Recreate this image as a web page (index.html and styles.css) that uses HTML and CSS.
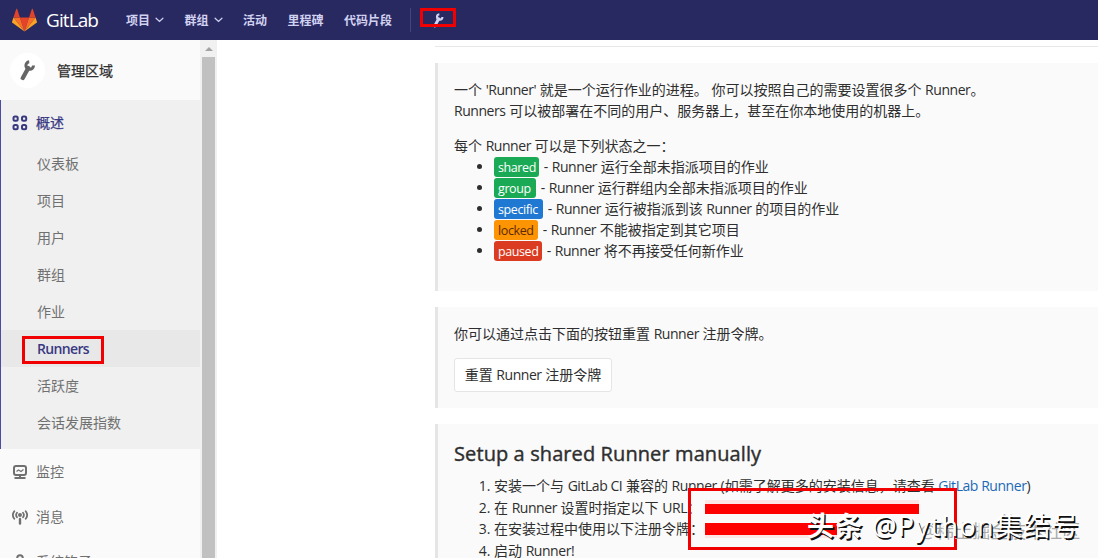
FILE: index.html
```
<!DOCTYPE html>
<html lang="zh-CN">
  <head>
    <meta charset="utf-8" />
    <title>Runners · 管理区域 · GitLab</title>
    <link rel="stylesheet" href="styles.css">
  </head>
  <body>
    <svg class="sprite">
      <symbol id="wrench" viewBox="0 0 16 21">
        <path d="M9.200 1.700A3.800 3.800 0 1 0 13.500 5.500" fill="none" stroke="currentColor" stroke-width="3" />
        <path d="M8.300 8 2.800 18" fill="none" stroke="currentColor" stroke-width="4.200" stroke-linecap="round" />
      </symbol>
      <symbol id="chevron" viewBox="0 0 10 6">
        <path d="M1.2 1.1 5 4.6l3.8-3.5" fill="none" stroke="currentColor" stroke-width="1.4" stroke-linecap="round" />
      </symbol>
    </svg>

    <header class="navbar">
      <a class="brand">
        <svg class="tanuki" viewBox="0 0 36 36">
          <path fill="#e24329" d="M18 34 24.6 13.700H11.400z" />
          <path fill="#fc6d26" d="M18 34 11.400 13.700H2.100z" />
          <path fill="#fca326" d="M2.100 13.700.1 19.900c-.2.600 0 1.200.5 1.500L18 34z" />
          <path fill="#e24329" d="M2.100 13.700h9.300L7.400 1.400c-.2-.6-1.100-.6-1.300 0z" />
          <path fill="#fc6d26" d="M18 34l6.600-20.300h9.300z" />
          <path fill="#fca326" d="M33.900 13.700l2 6.200c.2.600 0 1.200-.5 1.500L18 34z" />
          <path fill="#e24329" d="M33.900 13.700h-9.300l4-12.300c.2-.6 1.100-.6 1.300 0z" />
        </svg>
        <span class="brand-name">GitLab</span>
      </a>
      <nav class="nav-links">
        <a>项目 <svg class="chevron"><use href="#chevron" /></svg></a>
        <a>群组 <svg class="chevron"><use href="#chevron" /></svg></a>
        <a>活动</a>
        <a>里程碑</a>
        <a>代码片段</a>
      </nav>
      <a class="admin-link"><svg><use href="#wrench" /></svg></a>
    </header>

    <div class="page">
      <aside class="sidebar">
        <div class="context-header">
          <span class="avatar"><svg><use href="#wrench" /></svg></span>
          <span>管理区域</span>
        </div>
        <div class="section active">
          <a class="section-title">
            <svg class="icon" viewBox="0 0 16 16" fill="none" stroke="currentColor" stroke-width="2">
              <rect x="1.500" y="1.500" width="4.200" height="4.200" rx="1.500" />
              <rect x="10" y="1.500" width="4.200" height="4.200" rx="1.500" />
              <rect x="1.500" y="10" width="4.200" height="4.200" rx="1.500" />
              <rect x="10" y="10" width="4.200" height="4.200" rx="1.500" />
            </svg>
            概述
          </a>
          <ul class="sub-items">
            <li>仪表板</li>
            <li>项目</li>
            <li>用户</li>
            <li>群组</li>
            <li>作业</li>
            <li class="current">Runners</li>
            <li>活跃度</li>
            <li>会话发展指数</li>
          </ul>
        </div>
        <a class="section-title">
          <svg class="icon" viewBox="0 0 16 16" fill="none" stroke="currentColor">
            <rect x="2" y="2" width="12" height="9" rx="2" stroke-width="2" />
            <path d="m4.500 7.500 2-1.500 2.500 1.500 2.500-2" stroke-width="1.200" />
            <path d="M8 11v3M2.500 14h11" stroke-width="2" />
          </svg>
          监控
        </a>
        <a class="section-title">
          <svg class="icon" viewBox="0 0 16 16" fill="none" stroke="currentColor" stroke-width="1.800" stroke-linecap="round">
            <path d="M2.300 2.200Q-.6 6 2.300 9.800M13.700 2.200Q16.600 6 13.700 9.800M5 3.800Q3.200 6 5 8.200M11 3.800Q12.800 6 11 8.200" />
            <circle cx="8" cy="6" r="1.100" fill="currentColor" />
            <path d="M8 10v4.500" stroke-width="2.400" />
          </svg>
          消息
        </a>
        <a class="section-title">
          <svg class="icon" viewBox="0 0 16 16" fill="none" stroke="currentColor" stroke-width="2">
            <circle cx="8" cy="4" r="2.800" />
            <path d="M8 7v8M2 9q0 6 6 6t6-6" />
          </svg>
          系统钩子
        </a>
      </aside>
      <div class="scrollbar"></div>

      <main class="content">
        <hr />
        <section class="well intro">
          <p>一个 <span class="en">'Runner'</span> 就是一个运行作业的进程。 你可以按照自己的需要设置很多个 <span class="en">Runner</span>。<br />
            <span class="en">Runners</span> 可以被部署在不同的用户、服务器上，甚至在你本地使用的机器上。</p>
          <p class="states-title">每个 <span class="en">Runner</span> 可以是下列状态之一：</p>
          <ul class="states">
            <li><span class="badge green w-shared">shared</span> - <span class="en">Runner</span> 运行全部未指派项目的作业</li>
            <li><span class="badge green w-group">group</span> - <span class="en">Runner</span> 运行群组内全部未指派项目的作业</li>
            <li><span class="badge blue w-specific">specific</span> - <span class="en">Runner</span> 运行被指派到该 <span class="en">Runner</span> 的项目的作业</li>
            <li><span class="badge orange w-locked">locked</span> - <span class="en">Runner</span> 不能被指定到其它项目</li>
            <li><span class="badge red w-paused">paused</span> - <span class="en">Runner</span> 将不再接受任何新作业</li>
          </ul>
        </section>
        <section class="well reset">
          <p>你可以通过点击下面的按钮重置 <span class="en">Runner</span> 注册令牌。</p>
          <button>重置 <span class="en">Runner</span> 注册令牌</button>
        </section>
        <section class="well setup">
          <h4>Setup a shared Runner manually</h4>
          <ol>
            <li>安装一个与 <span class="en">GitLab CI</span> 兼容的 <span class="en">Runner</span> (如需了解更多的安装信息，请查看 <a class="en">GitLab Runner</a>)</li>
            <li>在 <span class="en">Runner</span> 设置时指定以下 <span class="en">URL</span>：</li>
            <li>在安装过程中使用以下注册令牌：</li>
            <li>启动 <span class="en">Runner!</span></li>
          </ol>
        </section>
      </main>
    </div>

    <!-- annotations drawn over the page -->
    <div class="mark mark-admin"></div>
    <div class="mark mark-runners"></div>
    <div class="mark mark-token"></div>
    <div class="redact redact-url"></div>
    <div class="redact redact-token"></div>
    <div class="watermark-site">@稀土掘金技术社区</div>
    <div class="watermark"><b>头条</b> @Python集结号</div>
  </body>
</html>
```
FILE: styles.css
```
* {
  box-sizing: border-box;
}
body {
  margin: 0;
  height: 558px;
  overflow: hidden;
  position: relative;
  background: #fff;
  color: #2e2e2e;
  font: 14px/21px "Open Sans", "Noto Sans CJK SC", sans-serif;
}
p,
ul,
ol,
h4 {
  margin: 0;
  padding: 0;
}
.sprite {
  position: absolute;
  width: 0;
  height: 0;
}
.en {
  letter-spacing: -0.45px;
}

/* top bar */
.navbar {
  display: flex;
  align-items: center;
  height: 40px;
  padding-left: 12px;
  background: #292961;
  color: #d1d1f0;
}
.brand {
  display: flex;
  align-items: center;
  width: 114px;
  color: #fff;
}
.tanuki {
  width: 25px;
  height: 25px;
}
.brand-name {
  margin-left: 9px;
  font: 19px/24px "Open Sans", sans-serif;
  letter-spacing: -0.9px;
}
.nav-links {
  display: flex;
  gap: 20.5px;
  font-size: 12px;
  font-weight: 600;
}
.nav-links a {
  display: flex;
  align-items: center;
}
.chevron {
  width: 9px;
  height: 6px;
  margin-left: 5px;
}
.admin-link {
  display: flex;
  align-items: center;
  height: 24px;
  margin-left: 18px;
  padding-left: 21px;
  border-left: 1px solid #45457a;
}
.admin-link svg {
  width: 13px;
  height: 15px;
}

/* sidebar */
.page {
  display: flex;
  height: 518px;
}
.sidebar {
  width: 200px;
  flex: none;
  overflow: hidden;
  background: #fafafa;
  color: #707070;
}
.context-header {
  display: flex;
  align-items: center;
  height: 60px;
  padding-left: 10px;
  gap: 12px;
  color: #2e2e2e;
  -webkit-text-stroke: 0.25px;
}
.avatar {
  display: flex;
  align-items: center;
  justify-content: center;
  width: 35px;
  height: 35px;
  border-radius: 50%;
  background: #fff;
}
.avatar svg {
  width: 16px;
  height: 21px;
  color: #666;
}
.active {
  height: 349px;
  background: #f0f0f0;
  border-left: 1px solid #4b4ba3;
}
.section-title {
  display: flex;
  align-items: center;
  height: 45px;
  padding-left: 12px;
  gap: 8px;
}
.active .section-title {
  padding-left: 11px;
  color: #393982;
  -webkit-text-stroke: 0.25px;
}
.icon {
  width: 16px;
  height: 16px;
}
.sub-items {
  list-style: none;
}
.sub-items li {
  height: 37px;
  padding-left: 36px;
  line-height: 37px;
}
.sub-items .current {
  background: #e8e8e8;
  color: #393982;
  font-weight: 600;
  letter-spacing: -0.65px;
}
.scrollbar {
  width: 17px;
  flex: none;
  border: solid #f1f1f1;
  border-width: 17px 2px 0;
  background: #c1c1c1;
  position: relative;
}
.scrollbar::before {
  content: "";
  position: absolute;
  top: -10px;
  left: 3px;
  border: solid transparent;
  border-width: 0 4px 4px;
  border-bottom-color: #a3a3a3;
}

/* main column */
.content {
  flex: 1;
  padding: 6px 0 0 218px;
  white-space: nowrap;
}
hr {
  height: 1px;
  margin: 0 0 16px;
  border: 0;
  background: #e8e8e8;
}
.well {
  margin-bottom: 16px;
  padding: 16px 16px 0;
  border-left: 3px solid #e5e5e5;
  background: #fafafa;
}
.intro {
  height: 228px;
}
.states-title {
  margin-top: 14px;
}
.states {
  padding-left: 40px;
}
.states li {
  height: 21px;
}
.badge {
  display: inline-block;
  height: 20px;
  margin: 1px 1px 0 0;
  padding: 0 4px;
  border-radius: 3px;
  color: #fff;
  font-size: 12.5px;
  line-height: 21px;
  letter-spacing: -0.4px;
  vertical-align: top;
}
.w-shared {
  width: 45px;
}
.w-group {
  width: 42px;
}
.w-specific {
  width: 49px;
}
.w-locked {
  width: 44px;
}
.w-paused {
  width: 48px;
}
.green {
  background: #1aaa55;
}
.blue {
  background: #1f78d1;
}
.orange {
  background: #fc9403;
  color: #5c2900;
}
.red {
  background: #db3b21;
}
.reset {
  height: 101px;
}
button {
  display: block;
  width: 158px;
  height: 34px;
  margin-top: 14px;
  padding: 0 0 2px;
  border: 1px solid #e5e5e5;
  border-radius: 3px;
  background: #fff;
  color: #2e2e2e;
  font: inherit;
}
.setup {
  height: 150px;
}
h4 {
  margin-bottom: 8px;
  font-size: 20px;
  font-weight: 400;
  line-height: 27px;
  letter-spacing: 0.1px;
  -webkit-text-stroke: 0.4px;
}
ol {
  padding-left: 40px;
  line-height: 21.5px;
}
ol a {
  color: #1b69b6;
}

/* annotations */
.mark {
  position: absolute;
  border: 3px solid #f00000;
}
.mark-admin {
  left: 420px;
  top: 8px;
  width: 36px;
  height: 19px;
}
.mark-runners {
  left: 22px;
  top: 336px;
  width: 82px;
  height: 28px;
}
.mark-token {
  left: 688px;
  top: 488px;
  width: 269px;
  height: 62px;
}
.redact {
  position: absolute;
  left: 705px;
  background: #f00;
}
.redact-url {
  top: 504px;
  width: 214px;
  height: 10px;
  box-shadow: 0 -4px 0 #fde6e6;
}
.redact-token {
  top: 523px;
  width: 132px;
  height: 12px;
  box-shadow: 0 3px 0 #fde6e6;
}
.watermark-site {
  position: absolute;
  left: 920px;
  top: 518px;
  color: #aaa;
  font-size: 18px;
  line-height: 26px;
  white-space: nowrap;
}
.watermark {
  position: absolute;
  left: 807px;
  top: 507px;
  color: #fff;
  font-size: 27px;
  line-height: 38px;
  letter-spacing: 1.4px;
  white-space: nowrap;
  text-shadow: 1.5px 1.5px 0 #111;
}
```
